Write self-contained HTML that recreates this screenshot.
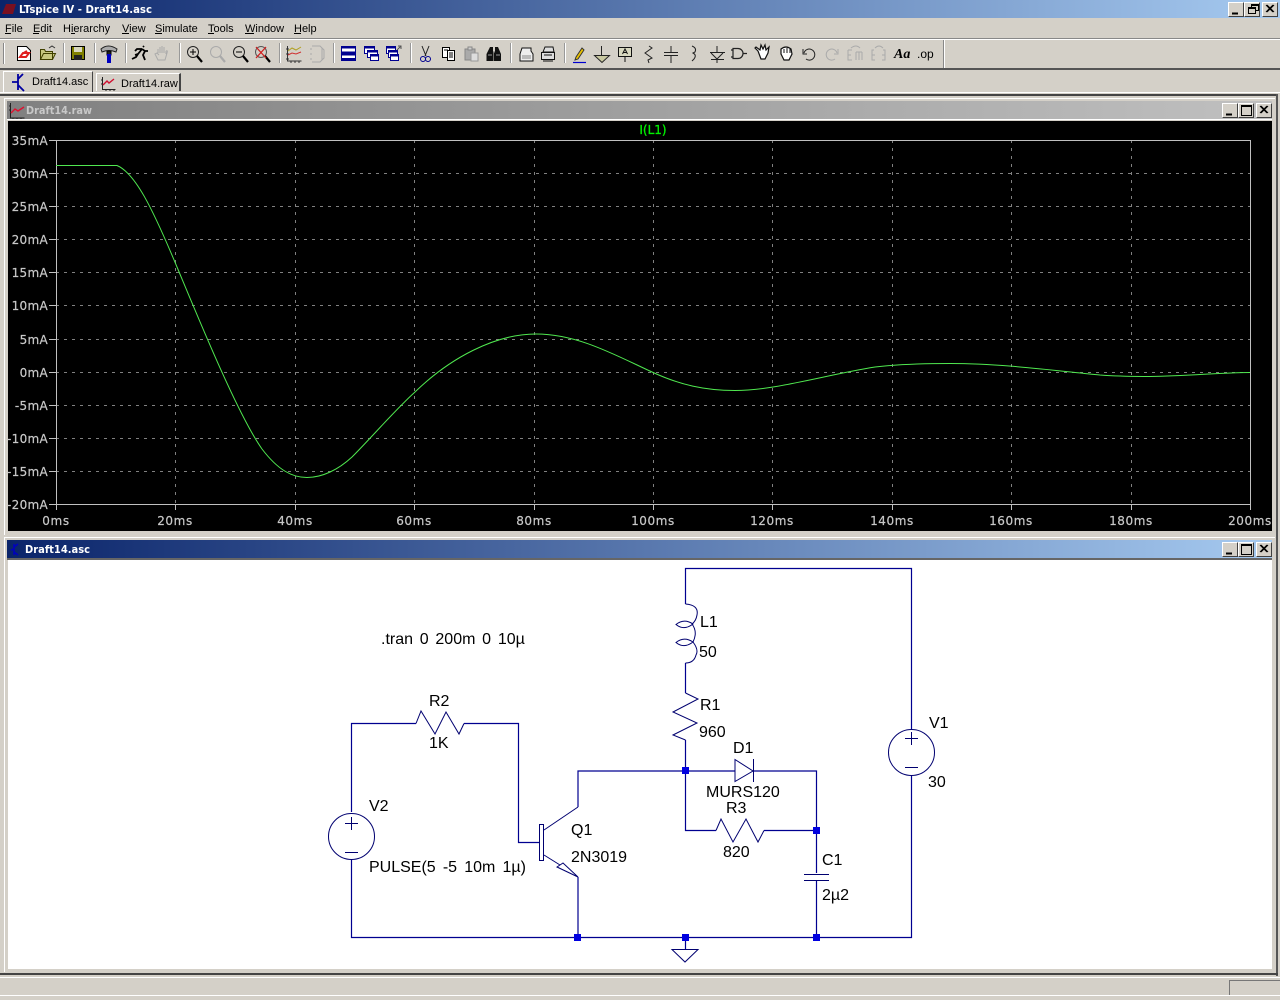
<!DOCTYPE html>
<html><head><meta charset="utf-8"><title>LTspice IV - Draft14.asc</title>
<style>
html,body{margin:0;padding:0;width:1280px;height:1000px;overflow:hidden;background:#d4d0c8}
.a{position:absolute}
.btn{position:absolute;width:14px;height:13px;background:#d4d0c8;border:1px solid;border-color:#fff #404040 #404040 #fff}
svg{position:absolute;left:0;top:0}
</style></head><body>
<div class="a" style="left:0;top:0;width:1280px;height:18px;background:linear-gradient(90deg,#0a246a,#a6caf0)"></div>
<div class="a" style="left:0;top:38px;width:1280px;height:1px;background:#888"></div>
<div class="a" style="left:0;top:39px;width:1280px;height:1px;background:#fff"></div>
<div class="a" style="left:0;top:68px;width:1280px;height:2px;background:#555"></div>
<div class="a" style="left:0;top:92px;width:1280px;height:1px;background:#fff"></div>
<div class="a" style="left:0;top:94px;width:1277px;height:2px;background:#444"></div>
<div class="a" style="left:1276px;top:94px;width:2px;height:882px;background:#555"></div>
<div class="a" style="left:0;top:973px;width:1278px;height:2px;background:#444"></div>
<div class="a" style="left:0;top:977px;width:1280px;height:1px;background:#fff"></div>
<div class="a" style="left:0;top:995px;width:1280px;height:1px;background:#fff"></div>
<div class="a" style="left:1229px;top:980px;width:51px;height:15px;border-left:1px solid #777;border-top:1px solid #777;box-sizing:border-box"></div>
<!-- child 1 -->
<div class="a" style="left:4px;top:98px;width:1271px;height:437px;background:#d4d0c8;border-top:1px solid #fff;border-left:1px solid #fff;box-sizing:border-box"></div>
<div class="a" style="left:7px;top:101px;width:1265px;height:18px;background:linear-gradient(90deg,#808080,#c0c0c0)"></div>
<div class="a" style="left:7px;top:119px;width:1265px;height:1px;background:#fff"></div>
<div class="a" style="left:8px;top:121px;width:1264px;height:410px;background:#000"></div>
<!-- child 2 -->
<div class="a" style="left:4px;top:537px;width:1271px;height:435px;background:#d4d0c8;border-top:1px solid #fff;border-left:1px solid #fff;box-sizing:border-box"></div>
<div class="a" style="left:7px;top:540px;width:1265px;height:18px;background:linear-gradient(90deg,#0a246a,#a6caf0)"></div>
<div class="a" style="left:7px;top:558px;width:1265px;height:2px;background:#666"></div>
<div class="a" style="left:8px;top:560px;width:1264px;height:409px;background:#fff"></div>
<!-- tabs -->
<div class="a" style="left:3px;top:71px;width:90px;height:21px;border-top:1px solid #fff;border-left:1px solid #fff;border-right:1px solid #444;box-sizing:border-box;background:#d4d0c8"></div>
<div class="a" style="left:96px;top:73px;width:85px;height:18px;border-top:1px solid #fff;border-left:1px solid #fff;border-right:2px solid #444;box-sizing:border-box;background:#d4d0c8"></div>
<!-- caption buttons -->
<div class="btn" style="left:1228px;top:2px"></div><div class="btn" style="left:1244px;top:2px"></div><div class="btn" style="left:1262px;top:2px"></div>
<div class="btn" style="left:1222px;top:103px"></div><div class="btn" style="left:1238px;top:103px"></div><div class="btn" style="left:1256px;top:103px"></div>
<div class="btn" style="left:1222px;top:542px"></div><div class="btn" style="left:1238px;top:542px"></div><div class="btn" style="left:1256px;top:542px"></div>

<svg width="1280" height="1000" viewBox="0 0 1280 1000" xmlns="http://www.w3.org/2000/svg">
<!-- caption glyphs -->
<g fill="none" stroke="#000" stroke-width="1">
<path d="M1232 13.500h6" stroke-width="2"/><path d="M1248.500 7.500h7v6h-7zM1251.500 7.500v-3h7v6h-3M1248.500 8.500h7M1251.500 5.500h7"/><path d="M1266 5l7 7M1267 5l7 7M1273 5l-7 7M1274 5l-7 7"/>
<path d="M1226 114.500h6" stroke-width="2"/><path d="M1241.500 105.500h10v10h-10zM1241.500 106.500h10"/><path d="M1260 106l7 7M1261 106l7 7M1267 106l-7 7M1268 106l-7 7"/>
<path d="M1226 553.500h6" stroke-width="2"/><path d="M1241.500 544.500h10v10h-10zM1241.500 545.500h10"/><path d="M1260 545l7 7M1261 545l7 7M1267 545l-7 7M1268 545l-7 7"/>
</g>
<!-- title -->
<path d="M6 4h10l-3 10H2z" fill="#7a1020"/>
<text x="19" y="13" font-family="'DejaVu Sans',sans-serif" font-weight="700" font-size="10.500" fill="#fff" textLength="133" lengthAdjust="spacingAndGlyphs">LTspice IV - Draft14.asc</text>
<!-- menu -->
<g font-family="'Liberation Sans',sans-serif" font-size="11" fill="#000">
<text x="5" y="32">File</text><text x="33" y="32">Edit</text><text x="63" y="32">Hierarchy</text><text x="122" y="32">View</text><text x="155" y="32">Simulate</text><text x="208" y="32">Tools</text><text x="245" y="32">Window</text><text x="294" y="32">Help</text>
</g>
<g stroke="#000" stroke-width="1"><path d="M5 33.500h6M33 33.500h6M71 33.500h4M122 33.500h7M155 33.500h7M208 33.500h6M245 33.500h9M294 33.500h7"/></g>
<!-- separators -->
<g stroke="#999"><path d="M63.500 43v20M94.500 43v20M125.500 43v20M179.500 43v20M279.500 43v20M333.500 43v20M410.500 43v20M510.500 43v20M564.500 43v20"/></g>
<g stroke="#fff"><path d="M64.500 43v20M95.500 43v20M126.500 43v20M180.500 43v20M280.500 43v20M334.500 43v20M411.500 43v20M511.500 43v20M565.500 43v20M944.500 40v28"/></g>
<path d="M943.500 40v28M3.500 43v21" stroke="#888"/><path d="M4.500 43v21" stroke="#fff"/>
<!-- toolbar icons -->
<g fill="none" stroke="#000">
<path d="M17.500 46.500h9l4 4v10h-13z" fill="#fff"/><path d="M20 57l3-4h6l-3 4zM22 54l5-3" stroke="#e02020" stroke-width="2"/>
<path d="M40.500 59.500v-10h4l1 2h7v8zM40.500 59.500l3-6h12l-3 6z" fill="#c8c880" stroke="#404000"/><path d="M49 48l3-2 3 2" stroke="#333"/>
<path d="M71.500 46.500h13v13h-13z" fill="#808000"/><path d="M74 47h8v5h-8z" fill="#d8d8c0" stroke="none"/><path d="M74 55h8v5h-8z" fill="#222" stroke="none"/>
<path d="M101 49q7-6 16 0l-1 3q-7-3-14 0z" fill="#aaa" stroke="#222"/><path d="M107 51h4v4h-4z" fill="#222"/><rect x="107" y="54" width="4" height="9" fill="#0000c0" stroke="none"/>
<g stroke-width="1.800"><path d="M144 46l-1 1M142 49l-4 5-3 1M142 49l3 2-2 4 2 5M138 54l-2 3-4 2M142 49h-5l-2 2M145 51h3"/></g>
<path d="M158 53v-4m2 4v-6m2 6v-7m2 7v-6m2 7v-3m0 0q2-1 1 2l-2 7h-7l-3-6 2-1 2 2" stroke="#aaa"/>
<circle cx="193" cy="52" r="5.500" stroke="#222"/><path d="M190 52h6M193 49v6"/><path d="M197 56l5 6" stroke-width="2.200"/>
<circle cx="216" cy="52" r="5.500" stroke="#aaa"/><path d="M220 56l5 6" stroke="#aaa" stroke-width="2.200"/>
<circle cx="239" cy="52" r="5.500" stroke="#222"/><path d="M236 52h6"/><path d="M243 56l5 6" stroke-width="2.200"/>
<circle cx="261" cy="52" r="5.500" stroke="#555"/><path d="M265 56l5 6" stroke-width="2.200"/><path d="M256 47l10 11M266 47l-10 11" stroke="#d02020" stroke-width="1.300"/>
<path d="M287.500 46v15h14M286 49h3M286 54h3M286 59h3M291 61v2M295 61v2M299 61v2" stroke="#333"/><path d="M288 51l4-3 4 2 5-3" stroke="#b0a020"/><path d="M288 55l4-2 4 1 5-2" stroke="#d03030"/>
<path d="M312 46h8l4 4v8l-4 4h-8M310 49h2M310 54h2M310 59h2M322 48v12" stroke="#aaa"/>
<path d="M341.500 46.500h14v14h-14z" stroke="#000090" fill="#fff"/><path d="M342 47.500h13M342 52.500h13M342 54.500h13" stroke="#000090" stroke-width="2"/><path d="M342 59h13" stroke="#000090" stroke-width="2"/>
<g stroke="#000090" fill="#fff"><rect x="364.500" y="46.500" width="10" height="7"/><rect x="367.500" y="50.500" width="10" height="7"/><rect x="370.500" y="54.500" width="8" height="6"/><path d="M365 47.500h9M368 51.500h9M371 55.500h7" stroke-width="2"/></g>
<g stroke="#000090" fill="#fff"><rect x="386.500" y="46.500" width="9" height="7"/><rect x="388.500" y="50.500" width="9" height="7"/><rect x="390.500" y="54.500" width="8" height="6"/><path d="M387 47.500h8M389 51.500h8M391 55.500h7" stroke-width="2"/></g><path d="M397 50l4-4m-3 0h3v3" stroke="#555"/>
<path d="M422 46l4 10M429 46l-4 10" stroke="#222"/><circle cx="423" cy="59" r="2.500" stroke="#000090"/><circle cx="428" cy="59" r="2.500" stroke="#000090"/>
<path d="M442.500 47.500h7v10h-7z" fill="#fff" stroke="#000"/><path d="M447.500 50.500h7v10h-7z" fill="#fff"/><path d="M444 50h4M449 53h4M449 55h4M449 57h4" stroke="#000"/>
<path d="M465 49h10v11h-10z" fill="#aaa" stroke="#888"/><path d="M468 47h4v3h-4z" stroke="#888" fill="#ccc"/><path d="M471 53h7v8h-7z" fill="#ddd" stroke="#999"/>
<g fill="#111" stroke="none"><path d="M490 47h3v4l.5 2v8h-7v-7z"/><path d="M495 47h3l3 7v7h-7v-8l1-2z"/></g><path d="M493 52h2" stroke="#777"/><path d="M488 55h4M496 55h4" stroke="#999"/>
<path d="M520 54l2-6h9v3l2 3v7h-13z" fill="#eee" stroke="#111"/><path d="M522 56h9M522 58h9" stroke="#888"/>
<path d="M543 52l2-5h8l1 5zM541.500 52.500h13v7h-13z" fill="#ddd" stroke="#111"/><path d="M543 61h10M544 55h8" stroke="#111"/>
<path d="M576 57l6-9 2 2-6 9-3 1z" fill="#e8c000" stroke="#333"/><path d="M573 62.500h13" stroke="#0000d0" stroke-width="1.200"/>
<path d="M601.500 46v9M594.500 55.500h15l-7.500 7z" fill="#c8c8a0" stroke="#222"/>
<path d="M618.500 47.500h13v9h-13z" fill="#d8d8c0" stroke="#111"/><path d="M625 57v5M622.500 54l2.500-5 2.500 5M623 52.500h4" stroke="#111"/>
<path d="M649 46l3 2-7 5 7 5-4 2 1 3" stroke="#222"/><path d="M671 46v6M664 52.500h14M664 55.500h14M671 56v7" stroke="#222"/>
<path d="M692 46q5 2 3 6l-2 1q4 2 1 6l-2 2" stroke="#222"/>
<path d="M717 46v6M710 52.500h15M711 53l6 6 6-6M711 59.500h13M717 60v3" stroke="#222"/>
<path d="M733 48.500h5a5 5 0 0 1 0 10h-5zM733 50h-2M733 57h-2M743 53.500h4" stroke="#222" stroke-width="1.200"/>
<path d="M758 51l-3-3 1-1 4 3 1-5 2 4 2-4 1 5 3-3-1 6-3 6h-4z" fill="#fff" stroke="#111" stroke-width="1.200"/>
<path d="M781 49q5-4 10 0l1 5-3 6h-5l-3-6z" fill="#fff" stroke="#111" stroke-width="1.200"/><path d="M784 49v4M787 48v5M790 49v4" stroke="#111"/>
<path d="M804 53a5.500 5.500 0 1 1 2 6M803 49v5h4" stroke="#222"/>
<path d="M837 53a5.500 5.500 0 1 0-2 6M838 49v5h-4" stroke="#aaa"/>
<path d="M848 50h4M848 50v10h4M848 55h3M856 52h6M856 52v8M859 52v8M862 52v8M851 48q5-4 9 0" stroke="#aaa"/>
<path d="M874 50h-2v10h3M883 50h2v10h-3M872 55h3M882 55h3M875 48q4-4 8 0" stroke="#aaa"/>
</g>
<text x="894" y="58" font-family="'Liberation Serif',serif" font-style="italic" font-weight="700" font-size="14" fill="#000">Aa</text>
<text x="917" y="58" font-family="'Liberation Sans',sans-serif" font-size="12" fill="#000">.op</text>
<!-- tab icons & text -->
<path d="M18 74v16M18 82h-6M18 79l5-5M18 85l6 6" stroke="#0000a0" stroke-width="1.800" fill="none"/>
<path d="M102.500 77v12.500h13M101 80h2M101 84h2M106 89v2M110 89v2M114 89v2" stroke="#222" fill="none"/><path d="M103 85l4-4 2 2 5-4" stroke="#d01030" stroke-width="1.400" fill="none"/>
<g font-family="'Liberation Sans',sans-serif" font-size="11" fill="#000">
<text x="32" y="85">Draft14.asc</text><text x="121" y="87">Draft14.raw</text>
</g>
<!-- child titles -->
<path d="M10.500 103v15h14M9 106h2M9 110h2M13 118v1M17 118v1M21 118v1" stroke="#222" fill="none"/><path d="M11 113l4-4 3 2 6-4" stroke="#e01030" stroke-width="1.400" fill="none"/>
<text x="26" y="114" font-family="'DejaVu Sans',sans-serif" font-weight="700" font-size="10.500" fill="#c8c8c8" textLength="66" lengthAdjust="spacingAndGlyphs">Draft14.raw</text>
<path d="M14 544v11M14 549l-3 1M14 547l4-3M14 552l4 3" stroke="#0000c0" stroke-width="1.500" fill="none"/>
<text x="25" y="553" font-family="'DejaVu Sans',sans-serif" font-weight="700" font-size="10.500" fill="#fff" textLength="65" lengthAdjust="spacingAndGlyphs">Draft14.asc</text>
<!-- plot -->
<g stroke="#808080" stroke-width="1" stroke-dasharray="3 5" fill="none">
<path d="M56 173.500H1250M56 206.500H1250M56 239.500H1250M56 272.500H1250M56 305.500H1250M56 339.500H1250M56 372.500H1250M56 405.500H1250M56 438.500H1250M56 471.500H1250"/>
<path d="M175.500 140V504M295.500 140V504M414.500 140V504M534.500 140V504M653.500 140V504M772.500 140V504M892.500 140V504M1011.500 140V504M1131.500 140V504"/>
</g>
<rect x="56.500" y="140.500" width="1194" height="364" fill="none" stroke="#c0c0c0"/>
<path d="M49 140.500h7M49 173.500h7M49 206.500h7M49 239.500h7M49 272.500h7M49 305.500h7M49 339.500h7M49 372.500h7M49 405.500h7M49 438.500h7M49 471.500h7M49 504.500h7M56.500 504v6M175.500 504v6M295.500 504v6M414.500 504v6M534.500 504v6M653.500 504v6M772.500 504v6M892.500 504v6M1011.500 504v6M1131.500 504v6M1250.500 504v6" stroke="#c0c0c0" fill="none"/>
<path d="M56 165.500L117 165.500C135 173 152 207 177 267C200 322 238 415 262 449C278 470 292 477.500 307 477.500C322 477.500 338 470 352 457C372 437 395 410 415 392C450 358 495 334 536 334C578 334 615 355 652 372C680 385 705 390.500 735 390.500C775 390.500 825 375 875 367C900 364 925 363.500 950 363.500C1000 363.500 1050 370 1100 375C1120 376.500 1135 376.500 1150 376.500C1190 376 1220 372.500 1250 372.500" fill="none" stroke="#50e850" stroke-width="1"/>
<text x="653" y="134" text-anchor="middle" font-family="'DejaVu Sans',sans-serif" font-size="12" fill="#00f000" stroke="#00f000" stroke-width=".3">I(L1)</text>
<g font-family="'DejaVu Sans',sans-serif" font-size="12" fill="#c8c8c8" stroke="#c8c8c8" stroke-width=".2" text-anchor="end" letter-spacing=".3">
<text x="48" y="145">35mA</text><text x="48" y="178">30mA</text><text x="48" y="211">25mA</text><text x="48" y="244">20mA</text><text x="48" y="277">15mA</text><text x="48" y="310">10mA</text><text x="48" y="344">5mA</text><text x="48" y="377">0mA</text><text x="48" y="410">-5mA</text><text x="48" y="443">-10mA</text><text x="48" y="476">-15mA</text><text x="48" y="509">-20mA</text>
</g>
<g font-family="'DejaVu Sans',sans-serif" font-size="12" fill="#c8c8c8" stroke="#c8c8c8" stroke-width=".2" text-anchor="middle" letter-spacing=".6">
<text x="56" y="525">0ms</text><text x="175" y="525">20ms</text><text x="295" y="525">40ms</text><text x="414" y="525">60ms</text><text x="534" y="525">80ms</text><text x="653" y="525">100ms</text><text x="772" y="525">120ms</text><text x="892" y="525">140ms</text><text x="1011" y="525">160ms</text><text x="1131" y="525">180ms</text><text x="1250" y="525">200ms</text>
</g>
<!-- schematic wires -->
<g fill="none" stroke="#000090" stroke-width="1.200">
<path d="M685.500 604V568.500H911.500V730M911.500 775V937.500H351.500V860M351.500 812V723.500H416M464 723.500H518.500V842.500H540M578 807V771H735M753 771H816.500V873M816.500 880V937.500M578 877V937.500M685.500 663V693M685.500 740V830.500H716M764 830.500H816.500M685.500 937.500V949"/>
</g>
<g fill="none" stroke="#000070" stroke-width="1">
<circle cx="911.500" cy="752.500" r="23"/><circle cx="351.500" cy="836.500" r="23"/>
<path d="M905 738.500h13M911.500 732v13M905 767.500h13M345 823.500h13M351.500 817v13M345 852.500h13"/>
<path d="M416 723.500L421 711L435 734L446 712L459 734L464 723.500"/>
<path d="M685.500 693L698 699L673 712L697 723L673 735L685.500 740"/>
<path d="M716 830.500L721 819L733 842L746 819L758 842L764 830.500"/>
<path d="M735 759.500V781.500L753 771ZM753.500 759V782"/>
<path d="M804 874.500H829M804 880.500H829"/>
<rect x="539.500" y="824.500" width="4" height="36"/>
<path d="M578 807L544 830M544 855L560 865M578 877L557 867L563 863Z"/>
<path d="M672 949.500H698L685 962Z"/>
<path d="M685.500 604Q699 605 697 615Q696 621 692 624Q698 632 693 642Q699 650 696 655Q694 663 685.500 663"/>
<path d="M676 624.500Q684 618 693 624Q684 631 676 624.500ZM676 642.500Q684 636 693 642Q684 649 676 642.500Z"/>
</g>
<g fill="#0000e0"><rect x="682" y="767" width="7" height="7"/><rect x="813" y="827" width="7" height="7"/><rect x="574" y="934" width="7" height="7"/><rect x="682" y="934" width="7" height="7"/><rect x="813" y="934" width="7" height="7"/></g>
<g font-family="'Liberation Sans',sans-serif" font-size="16" fill="#000">
<text x="381" y="644" word-spacing="2.300">.tran 0 200m 0 10µ</text>
<text x="700" y="627">L1</text><text x="699" y="657">50</text>
<text x="700" y="710">R1</text><text x="699" y="737">960</text>
<text x="733" y="753">D1</text><text x="706" y="797">MURS120</text>
<text x="726" y="813">R3</text><text x="723" y="857">820</text>
<text x="429" y="706">R2</text><text x="429" y="748">1K</text>
<text x="369" y="811">V2</text><text x="369" y="872" word-spacing="2.700">PULSE(5 -5 10m 1µ)</text>
<text x="571" y="835">Q1</text><text x="571" y="862">2N3019</text>
<text x="822" y="865">C1</text><text x="822" y="900">2µ2</text>
<text x="929" y="728">V1</text><text x="928" y="787">30</text>
</g>
</svg>
</body></html>
